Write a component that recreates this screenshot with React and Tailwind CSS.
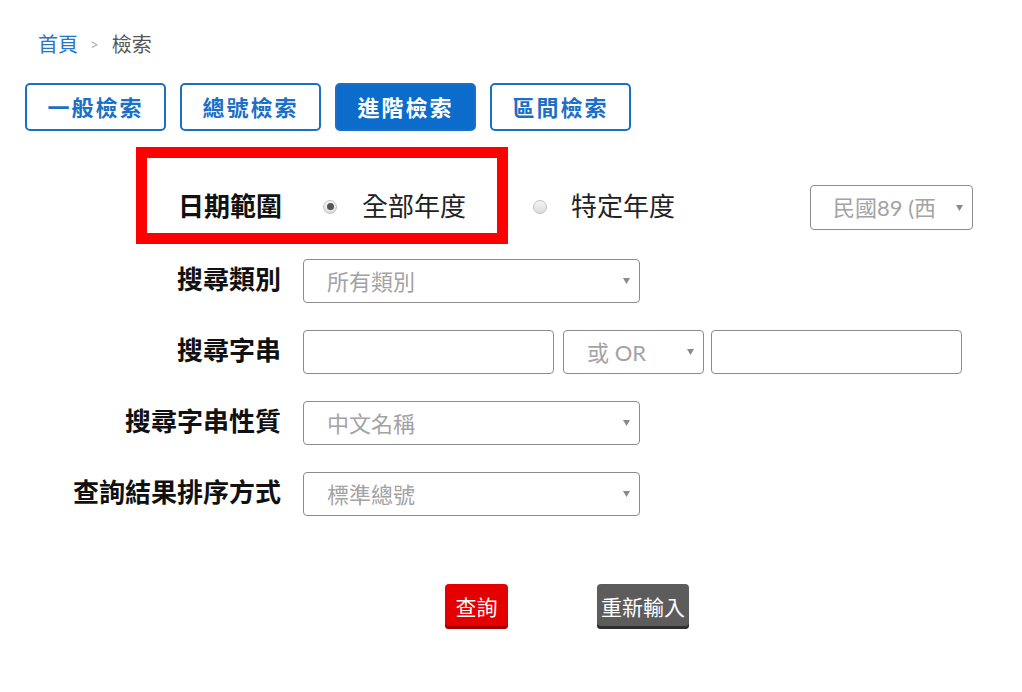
import { useState } from 'react';

const font = { fontFamily: '"Lato", "Noto Sans CJK TC", sans-serif' };

const tabs = ['一般檢索', '總號檢索', '進階檢索', '區間檢索'];

function Arrow() {
    return (
        <svg width="7" height="6" viewBox="0 0 7 6" className="shrink-0">
            <polygon points="0,0 7,0 3.5,6" fill="#8a8a8a" />
        </svg>
    );
}

function Radio({ checked }) {
    return (
        <span className="flex h-[14px] w-[14px] shrink-0 items-center justify-center rounded-full border border-[#c2c2c2] bg-gradient-to-b from-[#f4f4f4] to-[#dcdcdc]">
            {checked && <span className="h-[7px] w-[7px] rounded-full bg-[#555]" />}
        </span>
    );
}

function FakeSelect({ value, className = '' }) {
    return (
        <div
            className={`flex h-[44px] items-center justify-between rounded-[4px] border border-[#8c8c8c] bg-white pl-[23px] pr-[9px] ${className}`}
        >
            <span className="whitespace-nowrap text-[22px] leading-normal text-[#a3a3a3]">
                {value}
            </span>
            <Arrow />
        </div>
    );
}

function Row({ label, children, className = '' }) {
    return (
        <div className={`flex h-[44px] items-center ${className}`}>
            <div className="mt-[-3px] w-[282px] shrink-0 pr-[1px] text-right text-[26px] font-bold leading-normal text-[#111]">
                {label}
            </div>
            <div className="ml-[21px] flex items-center">{children}</div>
        </div>
    );
}

export default function App() {
    const [active, setActive] = useState(2);

    return (
        <div className="min-h-[692px] w-[1022px] bg-white pt-[32px]" style={font}>
            <div className="ml-[38px] flex h-[24px] items-center text-[20px] leading-normal">
                <span className="text-[#2a74c4]">首頁</span>
                <span className="ml-[12px] text-[15px] text-[#b0b0b0]">&gt;</span>
                <span className="ml-[13px] text-[#555]">檢索</span>
            </div>

            <div className="ml-[25px] mt-[27px] flex gap-[14px]">
                {tabs.map((t, i) => (
                    <button
                        key={t}
                        type="button"
                        onClick={() => setActive(i)}
                        className={`flex h-[48px] w-[141px] items-center justify-center rounded-[5px] border-2 border-[#1b6fc6] text-[22px] font-bold leading-normal tracking-[2px] ${
                            active === i ? 'bg-[#0b6ccc] text-white' : 'bg-white text-[#1b6fc6]'
                        }`}
                    >
                        {t}
                    </button>
                ))}
            </div>

            <div className="relative mt-[54px] flex h-[45px] items-center">
                <div className="pointer-events-none absolute left-[136px] top-[-38px] h-[97px] w-[372px] border-[11px] border-[#ff0000]" />
                <div className="mt-[-3px] w-[282px] shrink-0 text-right text-[26px] font-bold leading-normal text-[#111]">
                    日期範圍
                </div>
                <div className="ml-[41px] mt-[-2px]">
                    <Radio checked />
                </div>
                <span className="ml-[25px] mt-[-3px] text-[26px] leading-normal text-[#222]">全部年度</span>
                <div className="ml-[67px] mt-[-2px]">
                    <Radio />
                </div>
                <span className="ml-[24px] mt-[-3px] text-[26px] leading-normal text-[#222]">特定年度</span>
                <div className="ml-[135px] flex h-[45px] w-[163px] items-center justify-between rounded-[4px] border border-[#8c8c8c] pl-[22px] pr-[9px]">
                    <span className="w-[103px] overflow-hidden whitespace-nowrap text-[22px] leading-normal text-[#a3a3a3]">
                        民國89 (西元2000)
                    </span>
                    <Arrow />
                </div>
            </div>

            <Row label="搜尋類別" className="mt-[29px]">
                <FakeSelect value="所有類別" className="w-[337px]" />
            </Row>

            <Row label="搜尋字串" className="mt-[27px]">
                <input
                    type="text"
                    className="h-[44px] w-[251px] rounded-[4px] border border-[#8c8c8c] outline-none"
                />
                <FakeSelect value="或 OR" className="ml-[9px] w-[141px]" />
                <input
                    type="text"
                    className="ml-[7px] h-[44px] w-[251px] rounded-[4px] border border-[#8c8c8c] outline-none"
                />
            </Row>

            <Row label="搜尋字串性質" className="mt-[27px]">
                <FakeSelect value="中文名稱" className="w-[337px]" />
            </Row>

            <Row label="查詢結果排序方式" className="mt-[27px]">
                <FakeSelect value="標準總號" className="w-[337px]" />
            </Row>

            <div className="ml-[445px] mt-[68px] flex gap-[89px]">
                <button
                    type="button"
                    className="flex h-[45px] w-[63px] items-center justify-center rounded-[4px] bg-[#e50000] text-[21px] leading-normal text-white shadow-[inset_0_-3px_0_#a30000]"
                >
                    查詢
                </button>
                <button
                    type="button"
                    className="flex h-[45px] w-[92px] items-center justify-center rounded-[4px] bg-[#5c5c5c] text-[21px] leading-normal text-white shadow-[inset_0_-3px_0_#2e2e2e]"
                >
                    重新輸入
                </button>
            </div>
        </div>
    );
}
